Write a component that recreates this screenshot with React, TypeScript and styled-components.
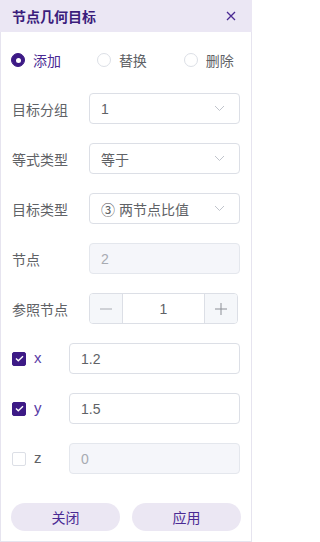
import React, { useState } from "react";
import styled, { createGlobalStyle } from "styled-components";

const Global = createGlobalStyle`
  html, body { margin: 0; padding: 0; background: #ffffff; }
  body { font-family: "Noto Sans CJK SC", "Noto Sans", sans-serif; }
  * { box-sizing: border-box; }
`;

const Panel = styled.div`
  width: 252px;
  height: 542px;
  border: 1px solid #e6e4ef;
  border-top: none;
  background: #fff;
  display: flex;
  flex-direction: column;
`;

const Header = styled.div`
  height: 32px;
  background: #ebe7f4;
  margin: 0 -1px;
  padding: 0 16px 0 12px;
  display: flex;
  align-items: center;
  justify-content: space-between;
`;

const Title = styled.div`
  font-size: 14px;
  font-weight: 700;
  color: #3b1d7c;
`;

const CloseBtn = styled.span`
  width: 10px;
  height: 10px;
  display: flex;
  align-items: center;
  justify-content: center;
`;

const Body = styled.div`
  padding: 18px 11px 0 11px;
  display: flex;
  flex-direction: column;
`;

const RadioRow = styled.div`
  height: 20px;
  display: flex;
  align-items: center;
  margin-bottom: 23px;
`;

const RadioItem = styled.label<{ w: number }>`
  display: flex;
  align-items: center;
  gap: 8px;
  width: ${(p) => p.w}px;
  cursor: pointer;
`;

const RadioDot = styled.span<{ on: boolean }>`
  width: 14px;
  height: 14px;
  margin-left: -1px;
  border-radius: 50%;
  border: 1px solid ${(p) => (p.on ? "#3d1a86" : "#dcdfe6")};
  background: ${(p) => (p.on ? "#3d1a86" : "#fff")};
  display: flex;
  align-items: center;
  justify-content: center;
  &::after {
    content: "";
    width: 5px;
    height: 5px;
    border-radius: 50%;
    background: ${(p) => (p.on ? "#fff" : "transparent")};
  }
`;

const RadioText = styled.span<{ on: boolean }>`
  font-size: 14px;
  color: ${(p) => (p.on ? "#4a2a93" : "#606266")};
`;

const Rows = styled.div`
  display: flex;
  flex-direction: column;
  gap: 19px;
`;

const Row = styled.div`
  height: 31px;
  display: flex;
  align-items: center;
`;

const Label = styled.div<{ w: number }>`
  width: ${(p) => p.w}px;
  flex: none;
  font-size: 14px;
  color: #606266;
`;

const Field = styled.div<{ disabled?: boolean }>`
  flex: 1;
  height: 31px;
  border: 1px solid ${(p) => (p.disabled ? "#e4e7ed" : "#dcdfe6")};
  border-radius: 4px;
  background: ${(p) => (p.disabled ? "#f5f6fa" : "#fff")};
  display: flex;
  align-items: center;
  padding: 0 14px 0 11px;
  font-size: 14px;
  color: ${(p) => (p.disabled ? "#a8abb2" : "#606266")};
  font-family: "Liberation Sans", "Noto Sans CJK SC", sans-serif;
`;

const FieldText = styled.span`
  flex: 1;
`;

const Stepper = styled.div`
  width: 149px;
  height: 31px;
  border: 1px solid #dcdfe6;
  border-radius: 4px;
  display: flex;
  overflow: hidden;
`;

const StepBtn = styled.div<{ side: "l" | "r" }>`
  width: 33px;
  background: #f5f7fa;
  display: flex;
  align-items: center;
  justify-content: center;
  border-left: ${(p) => (p.side === "r" ? "1px solid #dcdfe6" : "none")};
  border-right: ${(p) => (p.side === "l" ? "1px solid #dcdfe6" : "none")};
`;

const StepValue = styled.div`
  flex: 1;
  display: flex;
  align-items: center;
  justify-content: center;
  font-size: 14px;
  color: #606266;
  font-family: "Liberation Sans", sans-serif;
`;

const CheckBox = styled.span<{ on: boolean }>`
  width: 14px;
  height: 14px;
  border-radius: 2px;
  border: 1px solid ${(p) => (p.on ? "#3d1a86" : "#dcdfe6")};
  background: ${(p) => (p.on ? "#3d1a86" : "#fff")};
  display: flex;
  align-items: center;
  justify-content: center;
  flex: none;
`;

const CheckLabel = styled.div`
  width: 57px;
  flex: none;
  display: flex;
  align-items: center;
  gap: 8px;
`;

const AxisText = styled.span<{ on: boolean }>`
  font-size: 15px;
  font-family: "Liberation Sans", Arial, sans-serif;
  color: ${(p) => (p.on ? "#5a3ca6" : "#606266")};
  margin-top: -2px;
`;

const Footer = styled.div`
  margin: 29px -1px 0 -1px;
  display: flex;
  gap: 12px;
`;

const PillButton = styled.button`
  flex: 1;
  height: 28px;
  border: none;
  border-radius: 14px;
  background: #ebe7f3;
  color: #4a2a93;
  font-size: 14px;
  font-family: "Noto Sans CJK SC", "Noto Sans", sans-serif;
  cursor: pointer;
`;

const Chevron = () => (
  <svg width="11" height="7" viewBox="0 0 11 7">
    <path d="M1 1l4.5 4.5L10 1" fill="none" stroke="#c0c4cc" strokeWidth="1" />
  </svg>
);

const Check = () => (
  <svg width="9" height="7" viewBox="0 0 9 7">
    <path d="M1 3.5l2.3 2.3L8 1.2" fill="none" stroke="#fff" strokeWidth="1.4" />
  </svg>
);

export default function App() {
  const [mode, setMode] = useState(0);
  const modes = [
    { t: "添加", w: 87 },
    { t: "替换", w: 88 },
    { t: "删除", w: 56 },
  ];
  const axes = [
    { k: "x", on: true, v: "1.2" },
    { k: "y", on: true, v: "1.5" },
    { k: "z", on: false, v: "0" },
  ];
  return (
    <>
      <Global />
      <Panel>
        <Header>
          <Title>节点几何目标</Title>
          <CloseBtn>
            <svg width="10" height="10" viewBox="0 0 10 10">
              <path d="M1 1l8 8M9 1l-8 8" stroke="#4a2a93" strokeWidth="1.3" />
            </svg>
          </CloseBtn>
        </Header>
        <Body>
          <RadioRow>
            {modes.map((m, i) => (
              <RadioItem key={m.t} w={m.w} onClick={() => setMode(i)}>
                <RadioDot on={mode === i} />
                <RadioText on={mode === i}>{m.t}</RadioText>
              </RadioItem>
            ))}
          </RadioRow>
          <Rows>
            <Row>
              <Label w={77}>目标分组</Label>
              <Field>
                <FieldText>1</FieldText>
                <Chevron />
              </Field>
            </Row>
            <Row>
              <Label w={77}>等式类型</Label>
              <Field>
                <FieldText>等于</FieldText>
                <Chevron />
              </Field>
            </Row>
            <Row>
              <Label w={77}>目标类型</Label>
              <Field>
                <FieldText>③ 两节点比值</FieldText>
                <Chevron />
              </Field>
            </Row>
            <Row>
              <Label w={77}>节点</Label>
              <Field disabled>
                <FieldText>2</FieldText>
              </Field>
            </Row>
            <Row>
              <Label w={77}>参照节点</Label>
              <Stepper>
                <StepBtn side="l">
                  <svg width="12" height="2" viewBox="0 0 12 2">
                    <path d="M0 1h12" stroke="#a8abb2" strokeWidth="1" />
                  </svg>
                </StepBtn>
                <StepValue>1</StepValue>
                <StepBtn side="r">
                  <svg width="12" height="12" viewBox="0 0 12 12">
                    <path d="M0 6h12M6 0v12" stroke="#8c8f96" strokeWidth="1" />
                  </svg>
                </StepBtn>
              </Stepper>
            </Row>
            {axes.map((a) => (
              <Row key={a.k}>
                <CheckLabel>
                  <CheckBox on={a.on}>{a.on && <Check />}</CheckBox>
                  <AxisText on={a.on}>{a.k}</AxisText>
                </CheckLabel>
                <Field disabled={!a.on}>
                  <FieldText>{a.v}</FieldText>
                </Field>
              </Row>
            ))}
          </Rows>
          <Footer>
            <PillButton>关闭</PillButton>
            <PillButton>应用</PillButton>
          </Footer>
        </Body>
      </Panel>
    </>
  );
}
